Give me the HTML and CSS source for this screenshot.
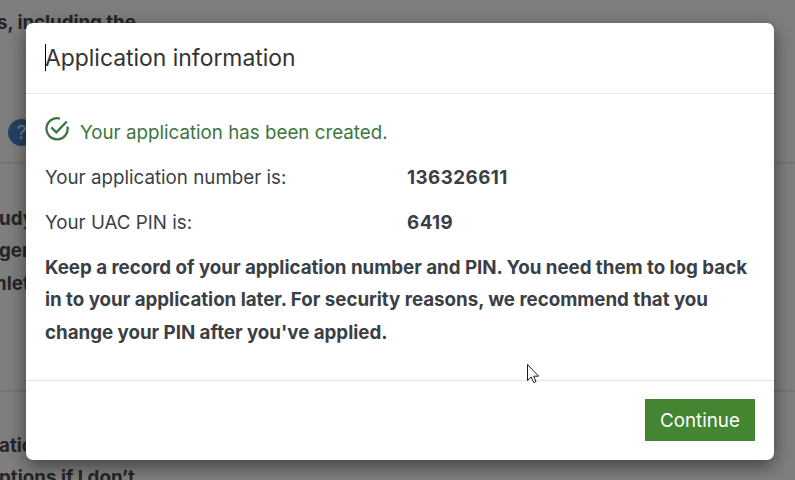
FILE: index.html
```html
<!DOCTYPE html>
<html lang="en">
<head>
<meta charset="utf-8">
<title>Application information</title>
<link rel="stylesheet" href="styles.css">
</head>
<body>
<main class="page">
  <section class="question first">
    <p>s, including the</p>
    <span class="help">?</span>
  </section>
  <section class="question second">
    <p>udy</p>
    <p>ger</p>
    <p class="clipped">nlet</p>
  </section>
  <section class="question third">
    <p>atic</p>
    <p>ptions if I don’t</p>
  </section>
</main>
<div class="backdrop">
  <div class="modal" role="dialog">
    <header class="modal-header"><span class="caret"></span><h1>Application information</h1></header>
    <div class="modal-body">
      <p class="success">
        <svg class="check" viewBox="0 0 24 24"><path d="M14.9 1.6A10.6 10.6 0 1 0 22.4 9.6M6.3 10.4l5 5L21.8 4.5"/></svg>
        <span>Your application has been created.</span>
      </p>
      <dl>
        <dt>Your application number is:</dt><dd>136326611</dd>
        <dt>Your UAC PIN is:</dt><dd>6419</dd>
      </dl>
      <p class="notice">Keep a record of your application number and PIN. You need them to log back<br>in to your application later. For security reasons, we recommend that you<br>change your PIN after you've applied.</p>
    </div>
    <footer class="modal-footer"><button>Continue</button></footer>
  </div>
</div>
<svg class="pointer" viewBox="0 0 12 20"><path d="M.5.5v16l3.7-3.5 2.5 5.5 2.3-1-2.4-5.3h5z"/></svg>
</body>
</html>
```
FILE: styles.css
```css
* { box-sizing: border-box; }
body {
  margin: 0;
  height: 480px;
  overflow: hidden;
  position: relative;
  background: #fff;
  color: #3a3f47;
  font: 400 18.75px/32.4px Inter, "Liberation Sans", sans-serif;
}
p, h1, dl, dd { margin: 0; }
.page { height: 480px; overflow: hidden; font-weight: 700; color: #4a4a4a; }
.question { border-bottom: 2px solid #e4edf4; white-space: nowrap; }
.first { height: 164px; padding-top: 7px; }
.first p { margin-left: -3px; letter-spacing: -.06px; }
.second { height: 228px; padding-top: 39px; }
.second p { margin-left: -1px; }
.third { padding-top: 38px; }
.third p { margin-left: -1px; }
.second .clipped { margin-left: -5px; }
.help {
  display: block;
  width: 27px;
  height: 27px;
  margin: 80px 0 0 8px;
  border-radius: 50%;
  background: #428bca;
  color: #fff;
  text-align: center;
  font-weight: 400;
  line-height: 27px;
}
.backdrop {
  position: absolute;
  inset: 0;
  padding: 23px 21px 20px 26px;
  background: rgba(0, 0, 0, .5);
}
.modal {
  height: 437px;
  border-radius: 7px;
  background: #fff;
  box-shadow: 0 6px 19px rgba(0, 0, 0, .5);
  display: flex;
  flex-direction: column;
}
.modal-header {
  position: relative;
  height: 71px;
  padding: 19px;
  border-bottom: 1px solid #e5e5e5;
}
h1 { font-size: 22.9px; font-weight: 400; line-height: 32px; color: #333; }
.caret { position: absolute; left: 19px; top: 21px; width: 1px; height: 27px; background: #000; }
.modal-body { flex: 1; padding: 23px 19px 0; }
.success { display: flex; height: 45px; color: #3c763d; }
.success span { margin-left: 11px; }
.check {
  width: 24px;
  height: 24px;
  fill: none;
  stroke: #3c763d;
  stroke-width: 2.3;
}
dl { display: grid; grid-template-columns: 362px 1fr; grid-auto-rows: 45px; }
dd, .notice { font-weight: 700; }
dd { letter-spacing: .45px; }
.notice { letter-spacing: -.03px; }
.modal-footer {
  height: 80px;
  padding: 18px 19px;
  border-top: 1px solid #e5e5e5;
  display: flex;
  justify-content: flex-end;
}
button {
  width: 110px;
  height: 42px;
  padding: 1px 0 0;
  border: 0;
  background: #438530;
  color: #fff;
  font: 400 18.75px/41px Inter, "Liberation Sans", sans-serif;
}
.pointer {
  position: absolute;
  left: 527px;
  top: 364px;
  width: 12px;
  height: 20px;
  fill: #fff;
  stroke: #1a1a24;
}
```
